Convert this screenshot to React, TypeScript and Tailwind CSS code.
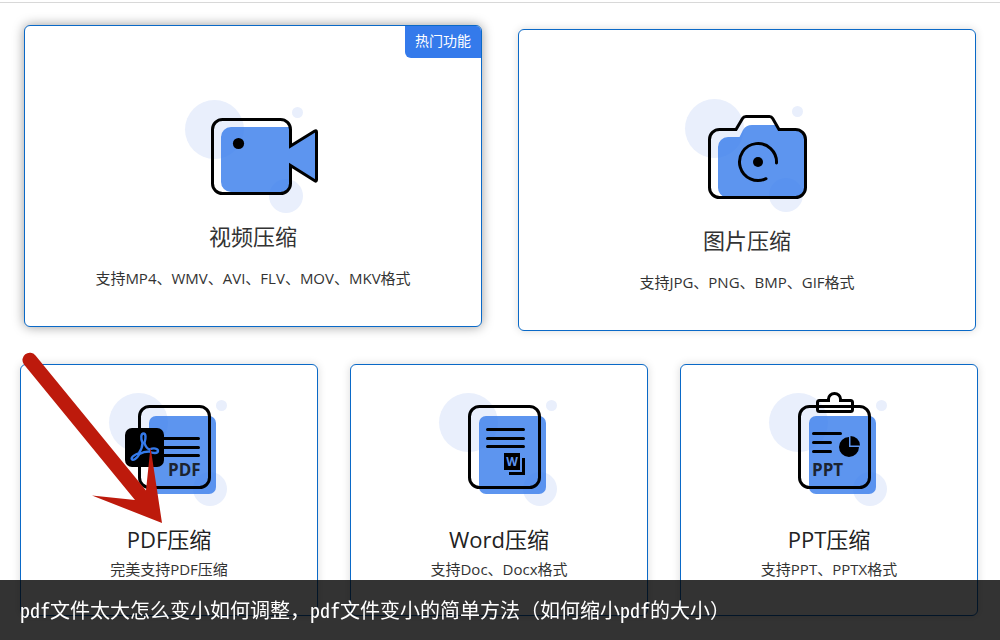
import type { ReactNode } from "react";
import { clsx } from "clsx";

type Feature = {
  title: string;
  desc: string;
  icon: ReactNode;
  hot?: boolean;
};

const BLUE = "#347aeb";

// Pale circles behind every icon
const Bubbles = () => (
  <g fill="#e9effc">
    <circle cx="29.5" cy="29.5" r="29.5" />
    <circle cx="112.5" cy="12.5" r="5.5" />
    <circle cx="101" cy="96" r="17" />
  </g>
);

const VideoIcon = () => (
  <svg width="136" height="113" viewBox="0 0 136 113" className="overflow-visible" aria-hidden="true">
    <Bubbles />
    <path
      d="M46 27H105.5V46L131.5 30V81L105.5 65V83.5a9 9 0 0 1-9 8.5H46a10 10 0 0 1-10-10V37a10 10 0 0 1 10-10z"
      fill={BLUE}
      opacity="0.8"
    />
    <path
      d="M105.5 46V29.5a10 10 0 0 0-10-10h-58a10 10 0 0 0-10 10v54a10 10 0 0 0 10 10h58a10 10 0 0 0 10-10V65.5L129.8 80.8q1.7 1 1.7-1V32q0-2-1.7-1z"
      fill="none"
      stroke="#000"
      strokeWidth="3"
    />
    <circle cx="53.5" cy="43.5" r="5.6" />
  </svg>
);

const CameraIcon = () => (
  <svg width="124" height="118" viewBox="0 0 124 118" className="overflow-visible" aria-hidden="true">
    <Bubbles />
    <path
      d="M43 38H54.5L58 31Q61 26 67 26H91.5L94 30.5H110.5a10 10 0 0 1 10 10v48a10 10 0 0 1-10 10H41a10 10 0 0 1-8-10V48a10 10 0 0 1 10-10z"
      fill={BLUE}
      opacity="0.8"
    />
    <path
      d="M34.5 30.5H51L57.5 19.5Q58.7 17.5 61 17.5H84.5Q86.5 17.5 87.7 19.5L94 30.5H110.5a10 10 0 0 1 10 10v48a10 10 0 0 1-10 10h-76a10 10 0 0 1-10-10v-48a10 10 0 0 1 10-10z"
      fill="none"
      stroke="#000"
      strokeWidth="3"
    />
    <path d="M91.5 64A18.5 18.5 0 1 0 81 79.7" fill="none" stroke="#000" strokeWidth="3" strokeLinecap="round" />
    <circle cx="73" cy="63" r="5" />
  </svg>
);

// Blue sheet with an outlined page on top
const DocIcon = ({ children }: { children: ReactNode }) => (
  <svg width="120" height="113" viewBox="0 0 120 113" className="overflow-visible" aria-hidden="true">
    <Bubbles />
    <rect x="40" y="23" width="67" height="78" rx="7" fill={BLUE} opacity="0.8" />
    <rect x="30.5" y="13.5" width="70" height="81" rx="10" fill="none" stroke="#000" strokeWidth="3" />
    {children}
  </svg>
);

const PdfIcon = () => (
  <DocIcon>
    <path d="M54 45.5H89.5M54 54.5H89.5M54 62.5H89.5" stroke="#000" strokeWidth="3" strokeLinecap="round" />
    <rect x="16" y="35" width="39" height="39" rx="7" />
    <path
      d="M33.5 50C31.5 45 32 40.5 34.5 40.5C37 40.5 37 45 35.5 50C36.5 53.5 38 55.5 40.5 56.5C45 54.5 49 55.5 49 58C49 60.5 44 60.5 40 58.5C36 58.5 33 59.5 30.5 61C28 65.5 24 68 22.8 66.2C21.8 64 26 61.5 30 60C32 57 33.5 54 33.5 50z"
      fill="none"
      stroke={BLUE}
      strokeWidth="2.4"
      strokeLinejoin="round"
    />
    <text x="59" y="83" fontSize="17" fontWeight="700" fill="#1c2430">PDF</text>
  </DocIcon>
);

const WordIcon = () => (
  <DocIcon>
    <path d="M48.5 36.5H84.5M48.5 45.5H84.5M48.5 53.5H84.5" stroke="#000" strokeWidth="3" strokeLinecap="round" />
    <rect x="65" y="60" width="16" height="17" />
    <text x="73" y="73" fontSize="12" fontWeight="700" textAnchor="middle" fill="#5d95ef">W</text>
    <path d="M84.5 65V80.5H70" fill="none" stroke="#000" strokeWidth="3" />
  </DocIcon>
);

const PptIcon = () => (
  <DocIcon>
    <path
      d="M59.5 7.5H50.5q-2 0-2 2v7q0 2 2 2h31q2 0 2-2v-7q0-2-2-2H71.5V6a6 5.5 0 0 0-12 0z"
      fill="none"
      stroke="#000"
      strokeWidth="3"
    />
    <path d="M44.5 40.5H71.5M44.5 49.5H61.5M44.5 58.5H61.5" stroke="#000" strokeWidth="3" strokeLinecap="round" />
    <path d="M80 44V54H90A10 10 0 1 1 80 44z" />
    <path d="M81.5 43A9.5 9.5 0 0 1 91 52.5H81.5z" />
    <text x="43" y="83" fontSize="17" fontWeight="700" fill="#1c2430">PPT</text>
  </DocIcon>
);

const Arrow = () => (
  <svg
    width="80"
    height="170"
    viewBox="0 0 80 170"
    className="absolute left-0 -top-3 z-10 overflow-visible pointer-events-none"
    aria-hidden="true"
  >
    <path d="M3 11.5A7 7 0 0 1 14.5 2.5L125 137.5L129.5 94L141 170L71 142.5L114 147z" fill="#bd1a0c" />
  </svg>
);

const mainFeatures: Feature[] = [
  { title: "视频压缩", desc: "支持MP4、WMV、AVI、FLV、MOV、MKV格式", icon: <VideoIcon />, hot: true },
  { title: "图片压缩", desc: "支持JPG、PNG、BMP、GIF格式", icon: <CameraIcon /> },
];

const docFeatures: Feature[] = [
  { title: "PDF压缩", desc: "完美支持PDF压缩", icon: <PdfIcon /> },
  { title: "Word压缩", desc: "支持Doc、Docx格式", icon: <WordIcon /> },
  { title: "PPT压缩", desc: "支持PPT、PPTX格式", icon: <PptIcon /> },
];

const App = () => {
  return (
    <div className="min-h-screen bg-white pt-0.5 text-[#333] font-['Open_Sans','Noto_Sans_CJK_SC',sans-serif]">
      <main className="border-t border-[#d8d8d8] pb-6">
        <section className="grid grid-cols-2 items-start gap-9 px-6 pt-[22px]">
          {mainFeatures.map((item) => (
            <article
              key={item.title}
              className={clsx(
                "relative flex flex-col items-center rounded-md border border-[#0a69c7] bg-white pb-[38px]",
                item.hot ? "pt-[74px] shadow-[0_0_12px_rgba(0,0,0,0.4)]" : "mt-1 pt-[69px] shadow-[0_0_8px_rgba(0,0,0,0.15)]"
              )}
            >
              {item.hot && (
                <span className="absolute right-0 top-0 rounded-bl-md rounded-tr-[5px] bg-[#347aeb] px-[10px] pb-[7px] pt-[5px] text-sm text-white">
                  热门功能
                </span>
              )}
              {item.icon}
              <h2 className="mt-[7px] text-[22px] leading-8">{item.title}</h2>
              <p className="mt-4 text-[15px] leading-5">{item.desc}</p>
            </article>
          ))}
        </section>

        <section className="grid grid-cols-3 gap-8 pl-5 pr-[22px] pt-[33px]">
          {docFeatures.map((item, index) => (
            <article
              key={item.title}
              className="relative flex flex-col items-center rounded-md border border-[#0a69c7] bg-white pb-9 pt-7 shadow-[0_0_8px_rgba(0,0,0,0.15)]"
            >
              {item.icon}
              <h2 className="mt-[17px] text-[22px] leading-8 text-[#222]">{item.title}</h2>
              <p className="mt-1 text-[15px] leading-5">{item.desc}</p>
              {index === 0 && <Arrow />}
            </article>
          ))}
        </section>
      </main>

      <footer className="fixed inset-x-0 bottom-0 z-20 bg-black/80 px-5 py-4 text-white">
        <h1 className="text-xl leading-7 font-['Noto_Sans_Mono_CJK_SC','Noto_Sans_CJK_SC',sans-serif]">
          pdf文件太大怎么变小如何调整，pdf文件变小的简单方法（如何缩小pdf的大小）
        </h1>
      </footer>
    </div>
  );
};

export default App;
